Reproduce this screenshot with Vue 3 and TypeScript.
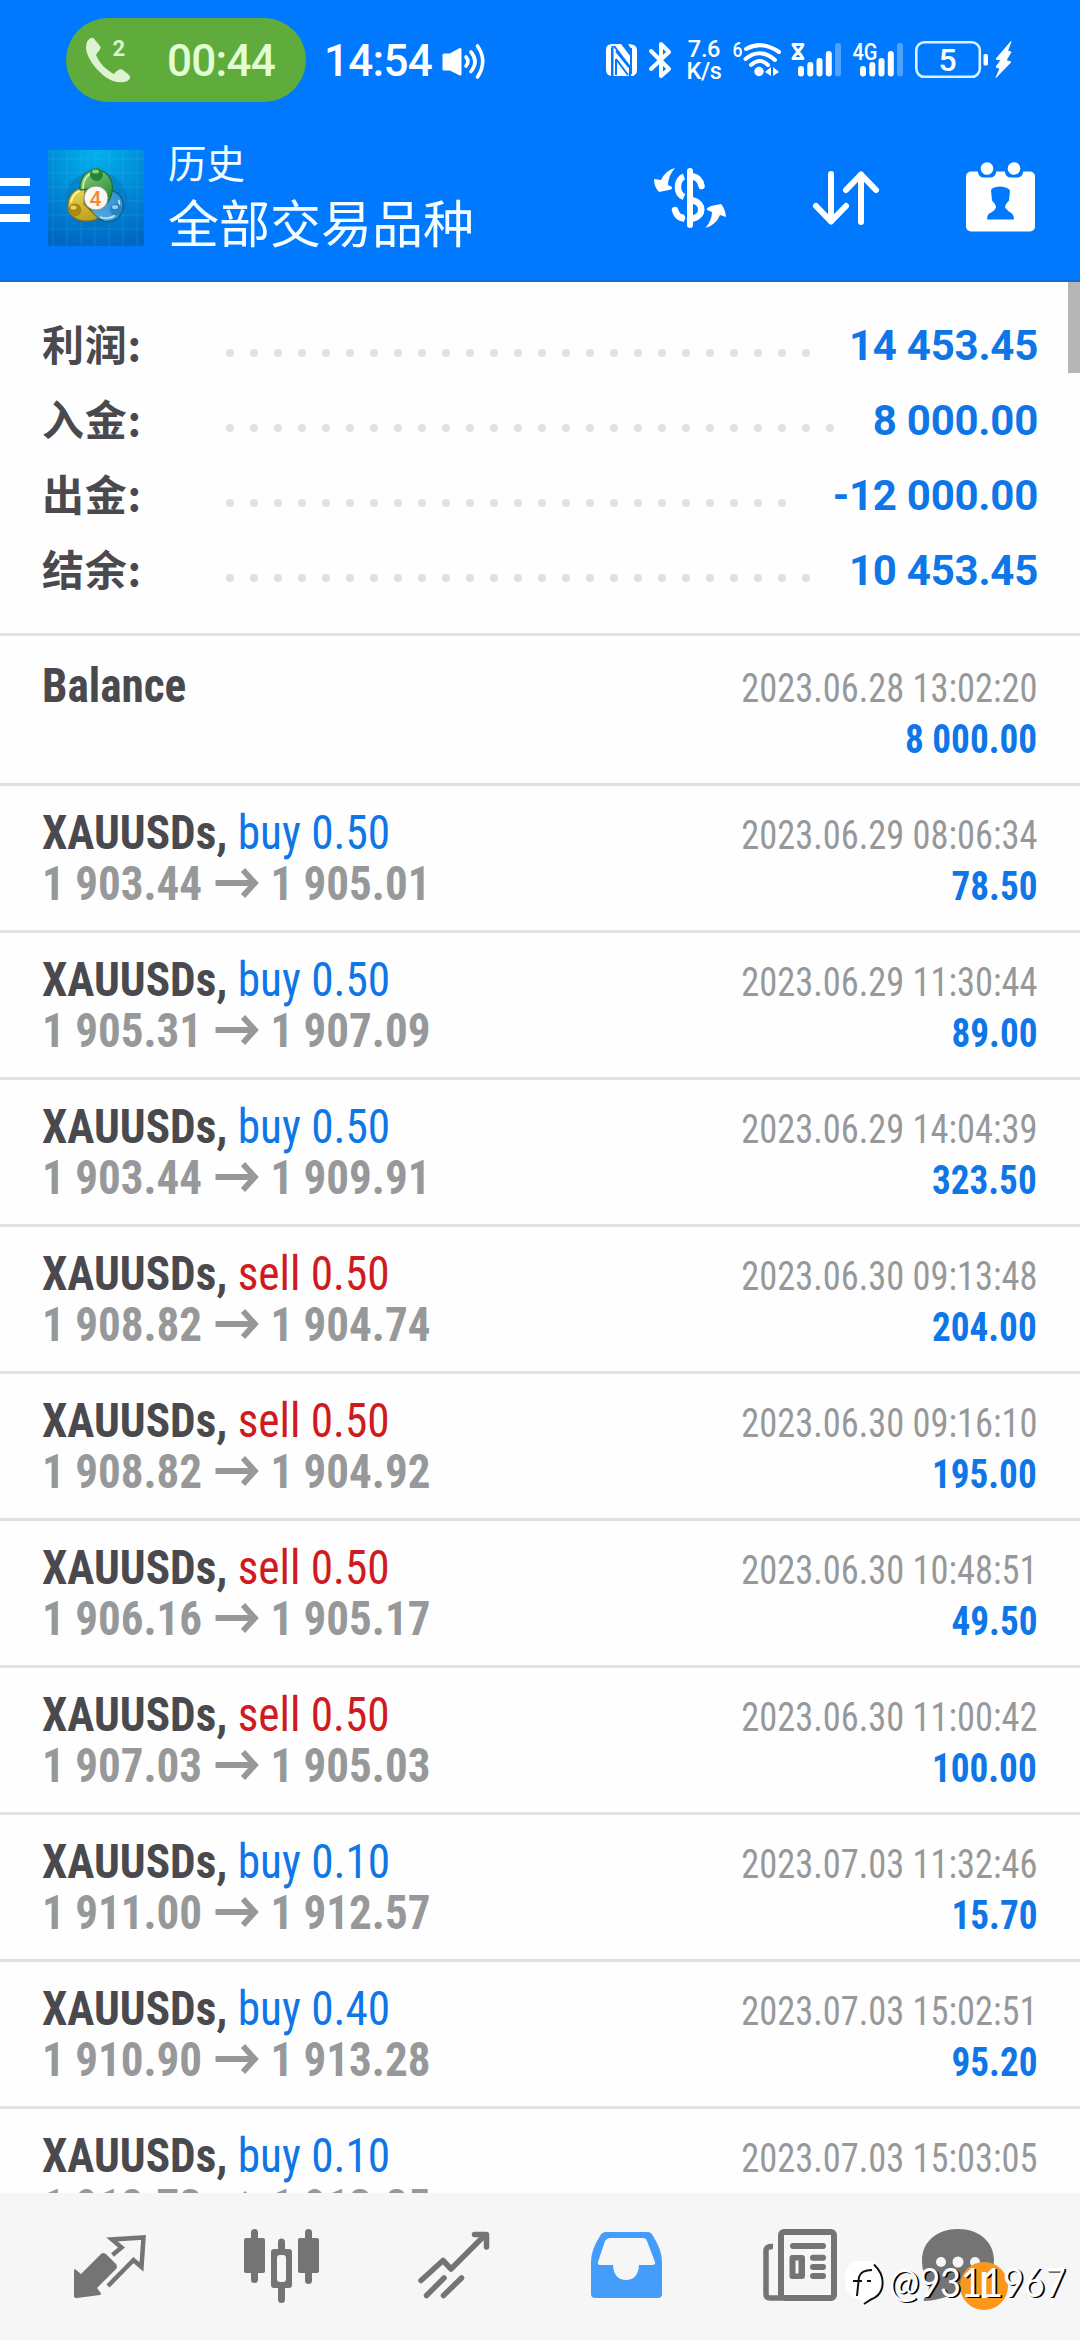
<script setup lang="ts">
interface SummaryLine {
  label: string
  value: string
  dots: number
}

interface Deal {
  side: 'buy' | 'sell'
  volume: string
  open: string
  close: string
  time: string
  profit: string
}

const summary: SummaryLine[] = [
  { label: '利润:', value: '14 453.45', dots: 25 },
  { label: '入金:', value: '8 000.00', dots: 26 },
  { label: '出金:', value: '-12 000.00', dots: 24 },
  { label: '结余:', value: '10 453.45', dots: 25 },
]

const deals: Deal[] = [
  { side: 'buy', volume: '0.50', open: '1 903.44', close: '1 905.01', time: '2023.06.29 08:06:34', profit: '78.50' },
  { side: 'buy', volume: '0.50', open: '1 905.31', close: '1 907.09', time: '2023.06.29 11:30:44', profit: '89.00' },
  { side: 'buy', volume: '0.50', open: '1 903.44', close: '1 909.91', time: '2023.06.29 14:04:39', profit: '323.50' },
  { side: 'sell', volume: '0.50', open: '1 908.82', close: '1 904.74', time: '2023.06.30 09:13:48', profit: '204.00' },
  { side: 'sell', volume: '0.50', open: '1 908.82', close: '1 904.92', time: '2023.06.30 09:16:10', profit: '195.00' },
  { side: 'sell', volume: '0.50', open: '1 906.16', close: '1 905.17', time: '2023.06.30 10:48:51', profit: '49.50' },
  { side: 'sell', volume: '0.50', open: '1 907.03', close: '1 905.03', time: '2023.06.30 11:00:42', profit: '100.00' },
  { side: 'buy', volume: '0.10', open: '1 911.00', close: '1 912.57', time: '2023.07.03 11:32:46', profit: '15.70' },
  { side: 'buy', volume: '0.40', open: '1 910.90', close: '1 913.28', time: '2023.07.03 15:02:51', profit: '95.20' },
  { side: 'buy', volume: '0.10', open: '1 912.73', close: '1 913.85', time: '2023.07.03 15:03:05', profit: '' },
]
</script>

<template>
  <div class="screen">
    <div class="status">
      <div class="call">
        <svg class="phone" width="48" height="48" viewBox="84 36 48 48">
          <path fill="#def3d2" d="M87 42C89 38 93 36 95 40L100 46C102 49 98 51 96 55C100 64 106 70 114 74C117 70 121 68 123 70L128 74C132 77 130 81 124 82C112 84 103 76 95 67C88 58 84 49 87 42Z" />
          <text x="112.5" y="56" class="svgtext" font-size="22" font-weight="700" fill="#def3d2">2</text>
        </svg>
        <span class="calltime">00:44</span>
      </div>
      <span class="clock">14:54</span>
      <svg class="speaker" width="44" height="36" viewBox="441 43 44 36">
        <path fill="#fff" stroke="#fff" stroke-width="3" stroke-linejoin="round" d="M444 55H450L460 49.500V74L450 69H444Z" />
        <path fill="none" stroke="#fff" stroke-width="3.600" stroke-linecap="round" d="M466 57Q470 61.500 466 66M471 52Q479 61.500 471 71.500M477.500 46Q488 61 477.500 77" />
      </svg>
      <div class="indicators">
        <svg width="31" height="34" viewBox="606 43 31 34">
          <path fill="#fff" d="M612 44H621L634 61V76L612.500 76V48L611 48V76Q606 75 606 70V50Q606 44 612 44Z" />
          <path fill="#fff" d="M628 44Q637 44 637 50V70Q637 76 630 76L632 73V50Z" />
          <path stroke="#0079ff" stroke-width="2" fill="none" d="M612.500 46V76M616 51L629 67M616 59V75M616 59L628 75M631 48V74M614 46L630 67V76" />
        </svg>
        <svg class="bt" width="24" height="38" viewBox="648 41 24 38">
          <path fill="none" stroke="#fff" stroke-width="4" stroke-linejoin="round" stroke-linecap="round" d="M651 51L669 69L661 76V44L669 52L651 69" />
        </svg>
        <div class="speed"><span>7.6</span><span>K/s</span></div>
        <svg class="wifi" width="50" height="38" viewBox="732 41 50 38">
          <text x="732.500" y="57" class="svgtext" font-size="21" font-weight="500" textLength="10" lengthAdjust="spacingAndGlyphs" fill="#fff">6</text>
          <path fill="none" stroke="#fff" stroke-width="4" stroke-linecap="round" d="M746 49Q762 40 779 52M745.500 59Q760 47 775 60M751 65Q760 57 768 65" />
          <circle cx="759" cy="71.500" r="4.700" fill="#fff" />
          <path fill="#fff" d="M765 72L771 67V76ZM779 72L773 67V76Z" />
        </svg>
        <svg class="sig" width="52" height="36" viewBox="790 42 52 36">
          <path fill="none" stroke="#fff" stroke-width="3" stroke-linejoin="round" d="M793 44.500H803L802 47L794.500 56L793 58.500H803L801.500 56L794.500 47Z" />
          <g stroke="#fff" stroke-width="6" stroke-linecap="round">
            <path d="M801 69V73.500M810.300 65V73.500M819.500 61V73.500M828.800 54V73.500" />
            <path d="M838 46V73.500" stroke="#4fa3ff" />
          </g>
        </svg>
        <svg class="sig4g" width="52" height="36" viewBox="852 42 52 36">
          <text x="852.500" y="60" class="svgtext" font-size="23" font-weight="500" textLength="25" lengthAdjust="spacingAndGlyphs" fill="#fff">4G</text>
          <g stroke="#fff" stroke-width="6" stroke-linecap="round">
            <path d="M863 69V73.500M872.300 65V73.500M881.500 61V73.500M890.800 54V73.500" />
            <path d="M900 46V73.500" stroke="#4fa3ff" />
          </g>
        </svg>
        <svg class="battery" width="99" height="40" viewBox="914 40 99 40">
          <rect x="916.300" y="42.300" width="63.500" height="34.500" rx="8" fill="none" stroke="#d9f3ff" stroke-width="2.600" />
          <rect x="983.500" y="54" width="4.500" height="11.500" rx="1.500" fill="#fff" />
          <text x="947.500" y="71" text-anchor="middle" class="svgtext" font-size="32" font-weight="500" fill="#fff">5</text>
          <path fill="#fff" stroke="#fff" stroke-width="1" stroke-linejoin="round" d="M1011 41.500L996 59L1001 60L996 67L1000 68.500L996 77.500L1011 62L1006 60.500L1011 52L1007.500 51Z" />
        </svg>
      </div>
    </div>

    <header class="appbar">
      <div class="burger"><i></i><i></i><i></i></div>
      <svg class="logo" width="96" height="96" viewBox="0 0 96 96">
        <defs>
          <radialGradient id="sky" cx="0.5" cy="0" r="1"><stop offset="0" stop-color="#00b4ec" /><stop offset="1" stop-color="#0068c4" /></radialGradient>
          <linearGradient id="green" x1="0" y1="0" x2="0.6" y2="1"><stop offset="0" stop-color="#8fd07c" /><stop offset="1" stop-color="#2a8f3a" /></linearGradient>
          <linearGradient id="gold" x1="0" y1="0" x2="0.4" y2="1"><stop offset="0" stop-color="#f0dd55" /><stop offset="1" stop-color="#c0a420" /></linearGradient>
          <linearGradient id="azure" x1="1" y1="0" x2="0.3" y2="1"><stop offset="0" stop-color="#2f8ed0" /><stop offset="1" stop-color="#4fa9dc" /></linearGradient>
        </defs>
        <rect width="96" height="96" fill="url(#sky)" />
        <path stroke="#4fc0f5" stroke-opacity="0.2" d="M5 0V96M19 0V96M33 0V96M47 0V96M61 0V96M75 0V96M89 0V96M0 9H96M0 23H96M0 37H96M0 51H96M0 65H96M0 79H96" />
        <ellipse cx="48" cy="49" rx="31" ry="28" fill="#075a94" opacity="0.25" />
        <path fill="url(#azure)" stroke="#12598c" stroke-width="1.200" d="M60 40C70 41 76 48 75 58C73 68 64 73 56 71C49 69 44 64 42 58Z" />
        <path fill="url(#gold)" stroke="#7d7624" stroke-width="1.200" d="M37 38C27 38 21 45 20 54C19 64 27 71 38 71C43 71 47 70 50 68L36 54Z" />
        <path fill="url(#green)" stroke="#216d31" stroke-width="1.200" d="M32 40C31 28 38 20 48 20C60 20 66 31 64 42C63 47 61 51 59 53L48 38Z" />
        <path fill="none" stroke="#d3efc0" stroke-width="1.600" d="M35 39Q35 28 42 24" />
        <path fill="none" stroke="#fff6b0" stroke-width="1.600" d="M23 52Q25 43 32 41" />
        <path fill="none" stroke="#c2e6fa" stroke-width="1.600" d="M71 50Q73 60 66 66Q60 70 52 67" />
        <circle cx="48.500" cy="24.500" r="6.500" fill="#25833a" /><ellipse cx="47.500" cy="21.500" rx="3.500" ry="2" fill="#8ccd82" />
        <circle cx="27" cy="60" r="6.500" fill="#a88a13" /><ellipse cx="25.500" cy="57.500" rx="3" ry="2" fill="#e9d467" />
        <circle cx="68" cy="59.500" r="6" fill="#2384c5" /><ellipse cx="67" cy="57" rx="3" ry="2" fill="#91cff2" />
        <circle cx="48" cy="48" r="12" fill="#fbf7f2" stroke="#8a8f78" stroke-width="0.900" />
        <text x="47.500" y="55.500" text-anchor="middle" class="svgtext" font-size="21" font-weight="500" fill="#f18a32">4</text>
      </svg>
      <div class="titles">
        <div class="t1">历史</div>
        <div class="t2">全部交易品种</div>
      </div>
      <div class="actions">
        <svg width="74" height="62" viewBox="653 167 74 62">
          <path fill="#fff" d="M675 168Q666 170 661 180L654 179Q654 187 659 192L669 190Q673 189 672 187L668 185Q668 176 675 168Z" />
          <path fill="#fff" d="M705.500 228Q716 225 720 215L726 217Q725 208 721 204L711 206Q706 208 707 210L712 212Q712 220 705.500 228Z" />
          <path fill="none" stroke="#fff" stroke-width="6" stroke-linecap="round" d="M690 171V225" />
          <path fill="none" stroke="#fff" stroke-width="6.500" d="M684 176.500C677 179 675 193 684 197" />
          <path fill="none" stroke="#fff" stroke-width="6.500" stroke-linecap="round" d="M693 176.500Q700 178 701.500 186M693 200.500C704 203 704 216 693 218.500M675 210Q677 217 682 218" />
          <path fill="#fff" d="M681 214.500H684V222L679 220Z" />
        </svg>
        <svg class="updown" width="66" height="56" viewBox="813 170 66 56">
          <path fill="none" stroke="#fff" stroke-width="6" stroke-linecap="round" stroke-linejoin="round" d="M831 174V221.500M816 206L831 221.500L846 206M861 222V174.500M846 190L861 174.500L876 190" />
        </svg>
        <svg class="cal" width="70" height="70" viewBox="966 161.500 70 70">
          <rect x="966" y="171" width="69" height="60" rx="5" fill="#fff" />
          <path fill="#0079ff" d="M978 170V172Q979 177 984 177H990Q995 177 996 172V170ZM1005 170V172Q1006 177 1011 177H1017Q1022 177 1023 172V170Z" />
          <circle cx="987" cy="168" r="6.300" fill="#fff" /><circle cx="1014" cy="168" r="6.300" fill="#fff" />
          <path fill="#0079ff" d="M992 188Q1000 184 1008 188L1010 190L1009 200Q1005 204 1005 207Q1008 211 1012 213Q1014 215 1014 219H987Q987 215 989 213Q994 211 996 207Q996 204 992 200L991 190Z" />
        </svg>
      </div>
    </header>

    <main class="content">
      <section class="summary">
        <div v-for="s in summary" :key="s.label" class="sline">
          <span class="slabel">{{ s.label }}</span>
          <span class="leader"><i v-for="n in s.dots" :key="n"></i></span>
          <span class="svalue">{{ s.value }}</span>
        </div>
      </section>

      <section class="deal balance">
        <div class="line"><span class="name">Balance</span><span class="time">2023.06.28 13:02:20</span></div>
        <div class="line amount"><span class="profit">8 000.00</span></div>
      </section>
      <section v-for="d in deals" :key="d.time" class="deal">
        <div class="line">
          <span class="name">XAUUSDs, <span :class="d.side">{{ d.side }} {{ d.volume }}</span></span>
          <span class="time">{{ d.time }}</span>
        </div>
        <div class="line">
          <span class="prices">{{ d.open }}<svg class="arrow" width="45" height="30" viewBox="0 0 43 30" preserveAspectRatio="none"><path d="M0 15H38M28 2L40 15L28 28" /></svg>{{ d.close }}</span>
          <span v-if="d.profit" class="profit">{{ d.profit }}</span>
        </div>
      </section>
      <div class="scrollbar"></div>
    </main>

    <nav class="tabs">
      <svg viewBox="68 20 84 90">
        <path fill="#747474" d="M103 53Q101.500 53 100 55L81 74L75 69Q74 69 74 71V96Q74 98 77 98L100 95Q102 94 100 92L97 88L116 69Q118 67 116 64L106 54Q104 53 103 53Z" />
        <path fill="none" stroke="#747474" stroke-width="4.500" d="M112.500 55L121.500 47.500L112 39.500L143.500 37.500L141.500 67L133.500 60L108 86" />
      </svg>
      <svg viewBox="240 20 84 90">
        <g fill="#747474">
          <rect x="244" y="38" width="21" height="35" rx="2" /><rect x="251" y="29" width="7" height="54" rx="3.500" />
          <rect x="271" y="49" width="21" height="39" rx="3" /><rect x="278" y="38.500" width="7" height="64.500" rx="3.500" />
          <rect x="298" y="38" width="21" height="35" rx="2" /><rect x="305" y="29" width="7" height="55" rx="3.500" />
        </g>
        <rect x="277" y="55" width="9" height="27" rx="3" fill="#f6f6f6" />
      </svg>
      <svg viewBox="412 20 84 90">
        <path fill="none" stroke="#747474" stroke-width="5.500" stroke-linecap="round" stroke-linejoin="round" d="M421 80.500L443 60.500L451 69L485 35M474.500 34.500H486.500V47M426.500 95.500L444 78M443.500 95.500L461.500 78" />
      </svg>
      <svg viewBox="584 20 84 90">
        <path fill="#449cfb" fill-rule="evenodd" d="M606 32H648Q651 32 653 36Q662 50 662 62V94Q662 98 658 98H595Q591 98 591 94V62Q591 50 600 36Q602 32 606 32ZM610 38Q607 38 605 41L598 62Q597 65 600 65H613Q614 80 626 80Q638 80 639 65H652Q656 65 655 62L647 41Q646 38 643 38Z" />
      </svg>
      <svg viewBox="756 20 84 90">
        <g fill="none" stroke="#747474" stroke-width="6">
          <rect x="781" y="32" width="53" height="66" rx="3" />
          <path d="M773 46.500Q766 46 766 51V94Q766 98 770 98H782" stroke-width="5.500" />
          <path d="M793 46H823M813 57.800H823M813 67H823M813 76H823" stroke-linecap="round" />
        </g>
        <path fill="#747474" fill-rule="evenodd" d="M792 55H802Q805 55 805 58V76Q805 79 802 79H792Q789.500 79 789.500 76V58Q789.500 55 792 55ZM795.500 60.500V73.500H798.500V60.500Z" />
      </svg>
      <svg viewBox="928 20 84 90">
        <path fill="#747474" d="M958 29C979 29 994 42 994 60C994 78 980 90 958 92C946 98 932 101 924 101C922 99 930 94 929 84C925 78 922 70 922 60C922 42 937 29 958 29Z" />
        <circle cx="941" cy="62" r="5" fill="#f6f6f6" /><circle cx="958" cy="62" r="5.500" fill="#f6f6f6" /><circle cx="975" cy="62" r="5" fill="#f6f6f6" />
        <circle cx="984" cy="86" r="24" fill="#fb981c" />
        <path stroke="#fff" stroke-width="4.500" d="M984 72V98" />
      </svg>
    </nav>

    <div class="watermark">
      <svg width="44" height="46" viewBox="842 2260 44 46">
        <path fill="#fff" d="M856 2261H872Q882 2265 882 2280Q882 2296 871 2300L865 2304L862 2300Q845 2298 845 2280Q845 2264 856 2261Z" />
        <path fill="none" stroke="#111" stroke-width="2" d="M857 2296Q858 2286 859 2277Q861 2270 872 2270M853 2281H862M867 2281H871M874 2264.500Q885 2275 882 2288Q880 2296 871 2299.500L864 2304" />
      </svg>
      <span>@9311967</span>
    </div>
  </div>
</template>

<style>
html,
body {
  margin: 0;
  overflow: hidden;
}
</style>

<style scoped>
.screen {
  position: relative;
  display: flex;
  flex-direction: column;
  width: 1080px;
  height: 2340px;
  overflow: hidden;
  background: #fefefe;
  font-family: Roboto, "Noto Sans CJK SC", sans-serif;
}
svg {
  display: block;
  flex: none;
  overflow: visible;
}
.svgtext {
  font-family: Roboto, sans-serif;
}
.status {
  display: flex;
  align-items: flex-start;
  height: 114px;
  flex: none;
  padding: 18px 0 0 66px;
  box-sizing: border-box;
  background: #0079ff;
  color: #fff;
}
.call {
  display: flex;
  width: 240px;
  height: 84px;
  border-radius: 42px;
  background: #5fac3d;
  color: #e2ffd4;
}
.phone {
  margin: 18px 0 0 18px;
}
.calltime,
.clock {
  font-size: 44px;
  font-weight: 500;
  line-height: 86px;
  letter-spacing: -0.7px;
}
.calltime {
  margin-left: 35px;
}
.clock {
  margin-left: 18px;
  width: 117px;
}
.speaker {
  margin-top: 25px;
}
.indicators {
  display: flex;
  align-items: center;
  height: 84px;
  margin-left: 121px;
}
.bt {
  margin-left: 11px;
}
.speed {
  display: flex;
  flex-direction: column;
  align-items: center;
  width: 38px;
  margin-left: 13px;
  font-size: 23.5px;
  font-weight: 500;
  line-height: 22px;
  letter-spacing: -0.3px;
}
.wifi {
  margin-left: 9px;
}
.sig {
  margin-left: 8px;
}
.sig4g,
.battery {
  margin-left: 10px;
}
.appbar {
  display: flex;
  align-items: flex-start;
  flex: none;
  height: 168px;
  box-sizing: border-box;
  border-bottom: 2px solid #146ccd;
  background: #0079ff;
  color: #f4fdff;
}
.burger {
  display: flex;
  flex-direction: column;
  gap: 10px;
  width: 30px;
  margin-top: 64px;
}
.burger i {
  height: 8px;
  background: #fff;
}
.logo {
  margin: 36px 0 0 18px;
}
.titles {
  width: 440px;
  margin: 22px 0 0 24px;
}
.t1 {
  font-size: 38.5px;
  line-height: 58px;
}
.t2 {
  font-size: 51px;
  line-height: 63px;
}
.actions {
  display: flex;
  align-items: center;
  height: 72px;
  margin: 48px 0 0 45px;
}
.updown {
  margin-left: 86px;
}
.cal {
  margin: -3px 0 0 87px;
}
.content {
  position: relative;
  height: 1911px;
  flex: none;
  overflow: hidden;
}
.scrollbar {
  position: absolute;
  top: 0;
  right: 0;
  width: 12px;
  height: 91px;
  background: #b6b6b6;
}
.summary {
  height: 351px;
  box-sizing: border-box;
  padding: 26px 42px 0 42px;
}
.sline {
  display: flex;
  height: 75px;
  font-size: 42px;
  line-height: 75px;
  font-weight: 700;
}
.slabel {
  width: 184px;
  color: #4a4a4e;
  font-family: "Noto Sans CJK SC", sans-serif;
  font-weight: 700;
  line-height: 69px;
  letter-spacing: 0.8px;
}
.leader {
  display: flex;
  flex: 1;
  gap: 16px;
  padding-top: 41px;
}
.leader i {
  width: 8px;
  height: 8px;
  border-radius: 50%;
  background: #e1e1e1;
}
.svalue {
  color: #0f76e8;
  letter-spacing: -0.25px;
}
.deal {
  height: 147px;
  box-sizing: border-box;
  padding: 21px 43px 0 42px;
  border-top: 3px solid #e2e2e2;
  font-family: "Roboto Condensed", Roboto, sans-serif;
  font-stretch: 75%;
}
.balance {
  height: 150px;
  padding-top: 24px;
}
.line {
  display: flex;
  justify-content: space-between;
  align-items: baseline;
  height: 51px;
  line-height: 51px;
  font-size: 48px;
  white-space: pre;
}
.amount {
  justify-content: flex-end;
  padding-top: 3px;
}
.name {
  color: #4a4a4e;
  font-weight: 700;
  transform: scaleX(0.943);
  transform-origin: left;
}
.buy,
.sell {
  font-weight: 400;
  color: #0f76e8;
}
.sell {
  color: #cf1b1f;
}
.time {
  font-size: 40px;
  color: #97989a;
  transform: scaleX(0.91);
  transform-origin: right;
}
.prices {
  font-weight: 700;
  color: #97989a;
  transform: scaleX(0.938);
  transform-origin: left;
}
.arrow {
  display: inline-block;
  margin: 0 14px;
  vertical-align: 2px;
}
.arrow path {
  fill: none;
  stroke: #97989a;
  stroke-width: 6;
}
.profit {
  font-size: 40px;
  font-weight: 700;
  color: #0f76e8;
  transform: scaleX(0.93);
  transform-origin: right;
}
.tabs {
  display: flex;
  justify-content: space-around;
  flex: none;
  height: 147px;
  padding: 27px 24px 0;
  box-sizing: border-box;
  background: #f6f6f6;
}
.tabs svg {
  width: 84px;
  height: 90px;
}
.watermark {
  position: absolute;
  left: 842px;
  top: 2260px;
  display: flex;
  color: #fff;
  font-family: Lato, sans-serif;
  font-size: 41px;
  font-weight: 400;
  line-height: 43px;
  text-shadow: 2px 1px 0.5px #000;
}
.watermark span {
  margin-left: 3px;
  transform: scaleX(0.88);
  transform-origin: left;
}
</style>
